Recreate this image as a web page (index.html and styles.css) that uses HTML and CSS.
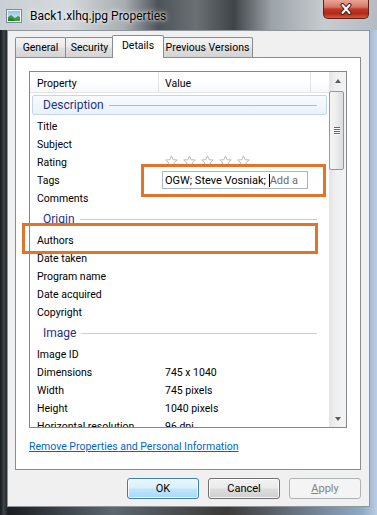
FILE: index.html
```html
<!DOCTYPE html>
<html lang="en">
<head>
  <meta charset="UTF-8">
  <title>Back1.xlhq.jpg Properties</title>
  <link rel="stylesheet" href="styles.css">
</head>
<body>
  <div class="window">
    <div class="titlebar">
      <svg class="app-icon" width="16" height="16" viewBox="0 0 16 16">
        <defs>
          <linearGradient id="sky" x1="0" y1="0" x2="0" y2="1">
            <stop offset="0" stop-color="#8fc3ea"/>
            <stop offset="1" stop-color="#e3f1fb"/>
          </linearGradient>
        </defs>
        <rect x="0.5" y="1.5" width="15" height="13" fill="#eef2f5" stroke="#7f8d99"/>
        <rect x="2" y="3" width="12" height="10" fill="url(#sky)"/>
        <path d="M2 13 L2 9 L5 7 L9 10 L12 8 L14 9 L14 13 Z" fill="#3f9b46"/>
        <path d="M2 13 L2 11 L6 10 L9 13 Z" fill="#2c7a33"/>
      </svg>
      <span class="title">Back1.xlhq.jpg Properties</span>
      <div class="close-btn">
        <svg width="14" height="12" viewBox="0 0 14 12">
          <path d="M3.5 2 L10.5 10 M10.5 2 L3.5 10" stroke="#4a1c14" stroke-width="4" stroke-linecap="round"/>
          <path d="M3.5 2 L10.5 10 M10.5 2 L3.5 10" stroke="#ffffff" stroke-width="2" stroke-linecap="round"/>
        </svg>
      </div>
    </div>

    <div class="face">
      <div class="tabs">
        <div class="tab tab-general">General</div>
        <div class="tab tab-security">Security</div>
        <div class="tab tab-details active">Details</div>
        <div class="tab tab-previous">Previous Versions</div>
      </div>

      <div class="panel">
        <div class="list">
          <div class="list-main">
            <div class="list-header">
              <div class="col col-prop">Property</div>
              <div class="col col-val">Value</div>
              <div class="col col-rest"></div>
            </div>

            <div class="group hot"><span class="group-name">Description</span><span class="group-line"></span></div>
            <div class="row"><span class="prop">Title</span><span class="val"></span></div>
            <div class="row"><span class="prop">Subject</span><span class="val"></span></div>
            <div class="row">
              <span class="prop">Rating</span>
              <span class="val stars">
                <svg class="star" viewBox="0 0 12 12"><path d="M6 0.8 L7.5 4.3 L11.3 4.6 L8.4 7.1 L9.3 10.9 L6 8.9 L2.7 10.9 L3.6 7.1 L0.7 4.6 L4.5 4.3 Z"/></svg>
                <svg class="star" viewBox="0 0 12 12"><path d="M6 0.8 L7.5 4.3 L11.3 4.6 L8.4 7.1 L9.3 10.9 L6 8.9 L2.7 10.9 L3.6 7.1 L0.7 4.6 L4.5 4.3 Z"/></svg>
                <svg class="star" viewBox="0 0 12 12"><path d="M6 0.8 L7.5 4.3 L11.3 4.6 L8.4 7.1 L9.3 10.9 L6 8.9 L2.7 10.9 L3.6 7.1 L0.7 4.6 L4.5 4.3 Z"/></svg>
                <svg class="star" viewBox="0 0 12 12"><path d="M6 0.8 L7.5 4.3 L11.3 4.6 L8.4 7.1 L9.3 10.9 L6 8.9 L2.7 10.9 L3.6 7.1 L0.7 4.6 L4.5 4.3 Z"/></svg>
                <svg class="star" viewBox="0 0 12 12"><path d="M6 0.8 L7.5 4.3 L11.3 4.6 L8.4 7.1 L9.3 10.9 L6 8.9 L2.7 10.9 L3.6 7.1 L0.7 4.6 L4.5 4.3 Z"/></svg>
              </span>
            </div>
            <div class="row">
              <span class="prop">Tags</span>
              <span class="val">
                <span class="edit">OGW; Steve Vosniak; <span class="caret"></span><span class="hint">Add a</span></span>
              </span>
            </div>
            <div class="row"><span class="prop">Comments</span><span class="val"></span></div>

            <div class="group"><span class="group-name">Origin</span><span class="group-line"></span></div>
            <div class="row"><span class="prop">Authors</span><span class="val"></span></div>
            <div class="row"><span class="prop">Date taken</span><span class="val"></span></div>
            <div class="row"><span class="prop">Program name</span><span class="val"></span></div>
            <div class="row"><span class="prop">Date acquired</span><span class="val"></span></div>
            <div class="row"><span class="prop">Copyright</span><span class="val"></span></div>

            <div class="group"><span class="group-name">Image</span><span class="group-line"></span></div>
            <div class="row"><span class="prop">Image ID</span><span class="val"></span></div>
            <div class="row"><span class="prop">Dimensions</span><span class="val">745 x 1040</span></div>
            <div class="row"><span class="prop">Width</span><span class="val">745 pixels</span></div>
            <div class="row"><span class="prop">Height</span><span class="val">1040 pixels</span></div>
            <div class="row"><span class="prop">Horizontal resolution</span><span class="val">96 dpi</span></div>
          </div>

          <div class="scrollbar">
            <div class="sb-btn"><span class="arrow-up"></span></div>
            <div class="sb-track">
              <div class="sb-thumb">
                <span class="grip"></span><span class="grip"></span><span class="grip"></span><span class="grip"></span>
              </div>
            </div>
            <div class="sb-btn"><span class="arrow-down"></span></div>
          </div>
        </div>

        <a href="#" class="remove-link">Remove Properties and Personal Information</a>
      </div>

      <div class="buttons">
        <button class="btn default">OK</button>
        <button class="btn">Cancel</button>
        <button class="btn disabled"><u>A</u>pply</button>
      </div>
    </div>

    <!-- annotation boxes drawn over the dialog -->
    <div class="highlight hl-tags"></div>
    <div class="highlight hl-authors"></div>
  </div>
</body>
</html>
```

FILE: styles.css
```css
body {
  margin: 0;
  font-family: Roboto, "Liberation Sans", Arial, sans-serif;
  font-size: 10.5px;
  color: #000;
}

.window {
  position: relative;
  width: 377px;
  height: 515px;
  display: flex;
  flex-direction: column;
  box-sizing: border-box;
  background: linear-gradient(to right, #16191c 0, #3e454c 4px, #1b1e21 8px, #5c6770 30%, #3d3a38 60%, #8fa9c6 96%, #b9cde4 100%);
}

/* title bar */
.titlebar {
  height: 30px;
  display: flex;
  align-items: center;
  padding-left: 6px;
  background: linear-gradient(to right, #c9cfd4 0, #d5d9dc 18%, #a7adb2 33%, #4d5358 42%, #6b7075 52%, #3f4448 62%, #9ba2a8 72%, #c7ccd0 86%, #b3bcc4 100%);
}
.app-icon {
  flex-shrink: 0;
  margin-top: 2px;
}
.title {
  margin-left: 8px;
  margin-top: 2px;
  font-size: 12px;
  color: #000;
  text-shadow: 0 0 6px rgba(255,255,255,0.9), 0 0 3px rgba(255,255,255,0.9);
}
.close-btn {
  margin-left: auto;
  margin-right: 8px;
  align-self: flex-start;
  width: 46px;
  height: 19px;
  box-sizing: border-box;
  border: 1px solid #5b2219;
  border-top: none;
  border-radius: 0 0 5px 5px;
  background: linear-gradient(to bottom, #e9a697 0, #d67562 40%, #c0392a 50%, #b22a18 75%, #d9573c 100%);
  display: flex;
  align-items: center;
  justify-content: center;
}

/* dialog face */
.face {
  flex: 1;
  margin: 0 7px 8px 7px;
  border: 1px solid #8e959b;
  background: #f0f0f0;
  padding: 4px 8px 7px 7px;
  display: flex;
  flex-direction: column;
}

.tabs {
  height: 22px;
  display: flex;
  align-items: flex-end;
  position: relative;
  z-index: 2;
}
.tab {
  height: 20px;
  box-sizing: border-box;
  border: 1px solid #898c95;
  border-bottom: none;
  border-radius: 2px 2px 0 0;
  background: linear-gradient(to bottom, #f3f3f3 0, #ebebeb 45%, #dedede 55%, #d4d4d4 100%);
  text-align: center;
  padding-top: 3px;
  white-space: nowrap;
}
.tab-general { width: 51px; }
.tab-security { width: 49px; margin-left: -1px; }
.tab-details { width: 52px; margin-left: -2px; margin-right: -2px; }
.tab-previous { width: 91px; }
.tab.active {
  height: 23px;
  margin-bottom: -1px;
  background: #fff;
  padding-top: 3px;
  position: relative;
  z-index: 3;
}

.panel {
  height: 413px;
  box-sizing: border-box;
  border: 1px solid #898c95;
  background: #fff;
  padding: 13px;
  position: relative;
  z-index: 1;
}

/* details list */
.list {
  height: 357px;
  box-sizing: border-box;
  border: 1px solid #828790;
  display: flex;
  overflow: hidden;
}
.list-main {
  flex: 1;
  overflow: hidden;
}
.list-header {
  height: 21px;
  display: flex;
  border-bottom: 1px solid #e3e5e8;
  box-sizing: border-box;
  background: linear-gradient(to bottom, #ffffff 0, #ffffff 50%, #f6f7f8 100%);
}
.col {
  line-height: 20px;
  padding-top: 2px;
  border-right: 1px solid #e2e4e7;
  box-sizing: border-box;
}
.col-prop { width: 129px; padding-left: 7px; }
.col-val { width: 152px; padding-left: 6px; }
.col-rest { flex: 1; border-right: none; }

.group {
  height: 24px;
  box-sizing: border-box;
  display: flex;
  align-items: center;
  padding: 0 12px 0 13px;
}
.group.hot {
  height: 20px;
  margin: 2px 2px 2px 2px;
  padding: 0 9px 0 10px;
  border: 1px solid #c3d6ee;
  border-radius: 2px;
  background: linear-gradient(to bottom, #f8fbfe 0, #e9f1fb 100%);
}
.group-name {
  color: #1e3287;
  font-size: 12px;
}
.group-line {
  flex: 1;
  height: 1px;
  margin-left: 5px;
  margin-top: 1px;
  background: #c4cfdd;
}
.group.hot .group-line { background: #a9bcd5; }

.row {
  height: 18px;
  display: flex;
  align-items: center;
  white-space: nowrap;
}
.prop {
  width: 129px;
  padding-left: 7px;
  box-sizing: border-box;
  flex-shrink: 0;
}
.val {
  padding-left: 6px;
  display: flex;
  align-items: center;
}
.stars {
  gap: 5px;
  margin-top: -2px;
}
.star {
  width: 13px;
  height: 13px;
}
.star path {
  fill: #fff;
  stroke: #b9b9b9;
  stroke-width: 0.9;
}
.edit {
  margin-left: -3px;
  width: 146px;
  height: 18px;
  box-sizing: border-box;
  border: 1px solid #a7b8cc;
  padding-left: 2px;
  display: flex;
  align-items: center;
  white-space: pre;
  font-size: 11px;
}
.caret {
  display: inline-block;
  width: 1px;
  height: 13px;
  background: #000;
}
.hint { color: #6d6d6d; }

/* scrollbar */
.scrollbar {
  width: 17px;
  display: flex;
  flex-direction: column;
  background: linear-gradient(to right, #e3e3e6 0, #f0f0f1 40%, #f3f3f3 100%);
}
.sb-btn {
  height: 17px;
  display: flex;
  align-items: center;
  justify-content: center;
}
.arrow-up, .arrow-down {
  width: 0;
  height: 0;
  border-left: 3.5px solid transparent;
  border-right: 3.5px solid transparent;
}
.arrow-up { border-bottom: 4px solid #5d5d5d; }
.arrow-down { border-top: 4px solid #5d5d5d; }
.sb-track {
  flex: 1;
  padding-top: 2px;
}
.sb-thumb {
  width: 15px;
  height: 79px;
  box-sizing: border-box;
  border: 1px solid #979797;
  border-radius: 2px;
  background: linear-gradient(to right, #f5f5f5 0, #ececec 50%, #dcdcdc 100%);
  display: flex;
  flex-direction: column;
  align-items: center;
  justify-content: center;
  gap: 1px;
}
.grip {
  width: 6px;
  height: 1px;
  background: #666;
  box-shadow: 0 1px 0 #fff;
}

.remove-link {
  display: block;
  margin-top: 12px;
  color: #0066cc;
  line-height: 13px;
}

/* buttons */
.buttons {
  margin-top: 8px;
  display: flex;
  justify-content: flex-end;
  gap: 9px;
}
.btn {
  width: 72px;
  height: 21px;
  font-family: inherit;
  font-size: 11px;
  color: #000;
  border: 1px solid #707070;
  border-radius: 3px;
  background: linear-gradient(to bottom, #f2f2f2 0, #ebebeb 48%, #dddddd 52%, #cfcfcf 100%);
  box-shadow: inset 0 0 0 1px rgba(255,255,255,0.8);
  padding: 0;
}
.btn.default {
  border-color: #3c7fb1;
  background: linear-gradient(to bottom, #eaf6fd 0, #d9f0fc 48%, #bee6fd 52%, #a7d9f5 100%);
}
.btn.disabled {
  border-color: #adb2b5;
  background: #f4f4f4;
  color: #838383;
  box-shadow: none;
}

/* orange annotation frames */
.highlight {
  position: absolute;
  border: 3px solid #e2742a;
  box-sizing: border-box;
  z-index: 5;
}
.hl-tags {
  left: 141px;
  top: 164px;
  width: 185px;
  height: 33px;
}
.hl-authors {
  left: 22px;
  top: 223px;
  width: 296px;
  height: 31px;
}
```
